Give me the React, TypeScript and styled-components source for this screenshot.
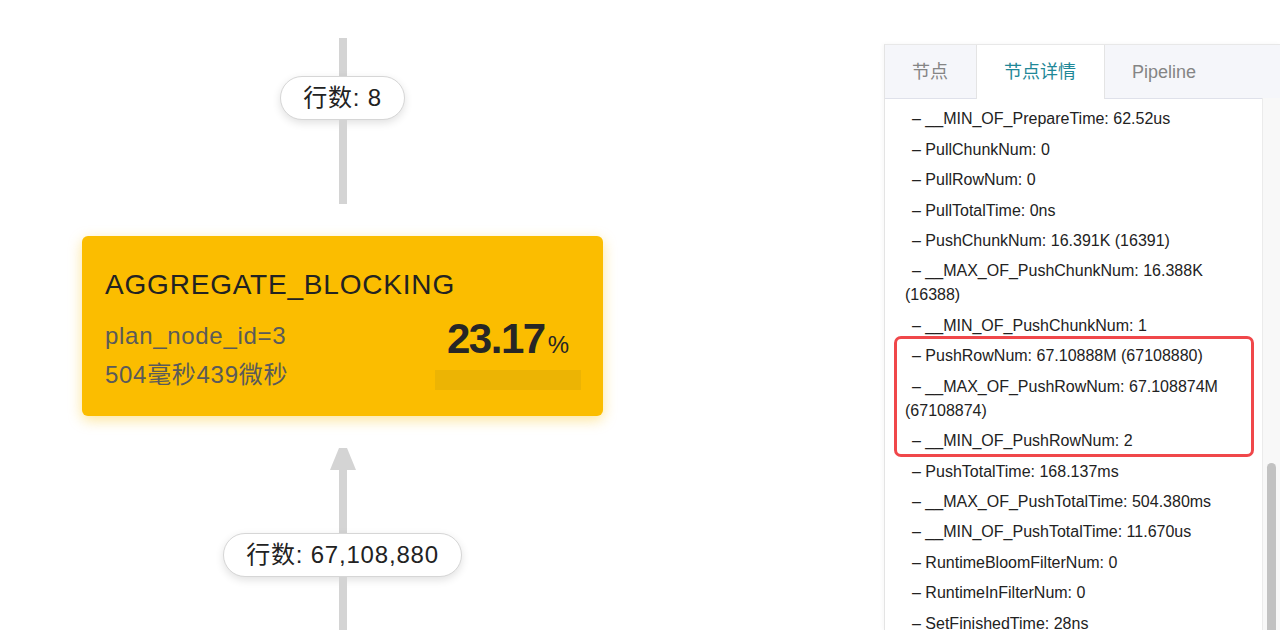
import React from "react";
import styled, { createGlobalStyle } from "styled-components";

const GlobalStyle = createGlobalStyle`
  html, body { margin: 0; padding: 0; background: #ffffff; }
  body {
    font-family: "Liberation Sans", "Noto Sans CJK SC", Arial, sans-serif;
    color: #222;
    overflow: hidden;
  }
  * { box-sizing: border-box; }
`;

const Page = styled.div`
  display: flex;
  width: 1280px;
  height: 630px;
  overflow: hidden;
  background: #fff;
`;

const Canvas = styled.div`
  flex: 0 0 884px;
  height: 630px;
  overflow: hidden;
`;

const Graph = styled.div`
  width: 685px;
  padding-top: 38px;
  display: flex;
  flex-direction: column;
  align-items: center;
`;

const EdgeLine = styled.div<{ $h: number }>`
  width: 8px;
  height: ${(p) => p.$h}px;
  background: #d4d4d4;
  flex: 0 0 auto;
`;

const EdgeLabel = styled.div`
  height: 44px;
  padding: 0 22px;
  display: flex;
  align-items: center;
  border: 1px solid #d6d6d6;
  border-radius: 22px;
  background: #fff;
  box-shadow: 0 3px 8px rgba(0, 0, 0, 0.12);
  font-size: 24px;
  line-height: 1;
  letter-spacing: 0.8px;
  color: #222;
  white-space: nowrap;
`;

const Spacer = styled.div<{ $h: number }>`
  height: ${(p) => p.$h}px;
  flex: 0 0 auto;
`;

const ArrowHead = styled.svg`
  display: block;
  flex: 0 0 auto;
`;

const Node = styled.div`
  width: 521px;
  height: 180px;
  background: #fbbd00;
  border-radius: 6px;
  box-shadow: 0 4px 14px rgba(250, 189, 0, 0.4);
  padding: 33px 22px 0 23px;
  display: flex;
  flex-direction: column;
`;

const NodeTitle = styled.div`
  font-size: 28px;
  line-height: 32px;
  color: #222;
  letter-spacing: 0.8px;
`;

const NodeBody = styled.div`
  margin-top: 15px;
  display: flex;
  justify-content: space-between;
  align-items: flex-start;
`;

const NodeInfo = styled.div`
  display: flex;
  flex-direction: column;
`;

const InfoLine = styled.div`
  font-size: 24px;
  line-height: 39px;
  letter-spacing: 0.7px;
  color: #5a5a5a;
`;

const Stat = styled.div`
  width: 146px;
  display: flex;
  flex-direction: column;
  align-items: center;
`;

const Percent = styled.div`
  margin-top: 1px;
  font-size: 42px;
  line-height: 44px;
  font-weight: 700;
  letter-spacing: -1.5px;
  color: #262626;
  white-space: nowrap;
`;

const PercentSign = styled.span`
  font-size: 24px;
  font-weight: 400;
  letter-spacing: 0;
  margin-left: 3px;
`;

const Bar = styled.div`
  margin-top: 3px;
  width: 146px;
  height: 20px;
  background: #ecb404;
`;

const Panel = styled.div`
  flex: 1;
  margin-top: 44px;
  border-left: 1px solid #e4e4e4;
  border-top: 1px solid #e8e8e8;
  display: flex;
  flex-direction: column;
  background: #fff;
  box-shadow: -1px 0 4px rgba(0, 0, 0, 0.04);
  min-width: 0;
`;

const TabBar = styled.div`
  height: 54px;
  flex: 0 0 auto;
  display: flex;
  background: #f5f6fa;
  border-bottom: 1px solid #dfe1ea;
`;

const Tab = styled.div<{ $active?: boolean; $w?: number }>`
  ${(p) => (p.$w ? `width: ${p.$w}px;` : "flex: 1;")}
  height: ${(p) => (p.$active ? "54px" : "53px")};
  padding-left: 27px;
  display: flex;
  align-items: center;
  font-size: 18px;
  line-height: 1;
  color: ${(p) => (p.$active ? "#1f8898" : "#858585")};
  background: ${(p) => (p.$active ? "#ffffff" : "transparent")};
  border-left: ${(p) => (p.$active ? "1px solid #e4e4e4" : "none")};
  border-right: ${(p) => (p.$active ? "1px solid #e4e4e4" : "none")};
  white-space: nowrap;
  position: relative;
  z-index: 1;
`;

const PanelBody = styled.div`
  flex: 1;
  display: flex;
  min-height: 0;
  margin-top: -1px;
`;

const Content = styled.div`
  flex: 1;
  overflow: hidden;
  padding: 6px 12px 0 20px;
  min-width: 0;
`;

const Item = styled.div`
  font-size: 16px;
  line-height: 24px;
  padding: 3.23px 0;
  text-indent: 7px;
  color: #222;
`;

const Highlight = styled.div`
  position: relative;
  &::before {
    content: "";
    position: absolute;
    left: -11px;
    right: -4px;
    top: -5px;
    bottom: -1px;
    border: 3px solid #f0474a;
    border-radius: 7px;
    pointer-events: none;
  }
`;

const ScrollTrack = styled.div`
  flex: 0 0 18px;
  background: #f8f8f8;
  border-left: 1px solid #ebebeb;
  padding: 365px 0 0 4px;
`;

const ScrollThumb = styled.div`
  width: 9px;
  height: 400px;
  border-radius: 5px;
  background: #c2c2c2;
`;

const before = [
  "– __MIN_OF_PrepareTime: 62.52us",
  "– PullChunkNum: 0",
  "– PullRowNum: 0",
  "– PullTotalTime: 0ns",
  "– PushChunkNum: 16.391K (16391)",
  "– __MAX_OF_PushChunkNum: 16.388K (16388)",
  "– __MIN_OF_PushChunkNum: 1",
];

const highlighted = [
  "– PushRowNum: 67.10888M (67108880)",
  "– __MAX_OF_PushRowNum: 67.108874M (67108874)",
  "– __MIN_OF_PushRowNum: 2",
];

const after = [
  "– PushTotalTime: 168.137ms",
  "– __MAX_OF_PushTotalTime: 504.380ms",
  "– __MIN_OF_PushTotalTime: 11.670us",
  "– RuntimeBloomFilterNum: 0",
  "– RuntimeInFilterNum: 0",
  "– SetFinishedTime: 28ns",
];

export default function App() {
  return (
    <Page>
      <GlobalStyle />
      <Canvas>
        <Graph>
          <EdgeLine $h={38} />
          <EdgeLabel>行数: 8</EdgeLabel>
          <EdgeLine $h={84} />
          <Spacer $h={32} />
          <Node>
            <NodeTitle>AGGREGATE_BLOCKING</NodeTitle>
            <NodeBody>
              <NodeInfo>
                <InfoLine>plan_node_id=3</InfoLine>
                <InfoLine>504毫秒439微秒</InfoLine>
              </NodeInfo>
              <Stat>
                <Percent>
                  23.17<PercentSign>%</PercentSign>
                </Percent>
                <Bar />
              </Stat>
            </NodeBody>
          </Node>
          <Spacer $h={32} />
          <ArrowHead width="26" height="22" viewBox="0 0 26 22">
            <polygon points="9,0 17,0 26,22 0,22" fill="#d4d4d4" />
          </ArrowHead>
          <EdgeLine $h={63} />
          <EdgeLabel>行数: 67,108,880</EdgeLabel>
          <EdgeLine $h={80} />
        </Graph>
      </Canvas>
      <Panel>
        <TabBar>
          <Tab $w={91}>节点</Tab>
          <Tab $w={129} $active>
            节点详情
          </Tab>
          <Tab>Pipeline</Tab>
        </TabBar>
        <PanelBody>
          <Content>
            {before.map((t) => (
              <Item key={t}>{t}</Item>
            ))}
            <Highlight>
              {highlighted.map((t) => (
                <Item key={t}>{t}</Item>
              ))}
            </Highlight>
            {after.map((t) => (
              <Item key={t}>{t}</Item>
            ))}
          </Content>
          <ScrollTrack>
            <ScrollThumb />
          </ScrollTrack>
        </PanelBody>
      </Panel>
    </Page>
  );
}
